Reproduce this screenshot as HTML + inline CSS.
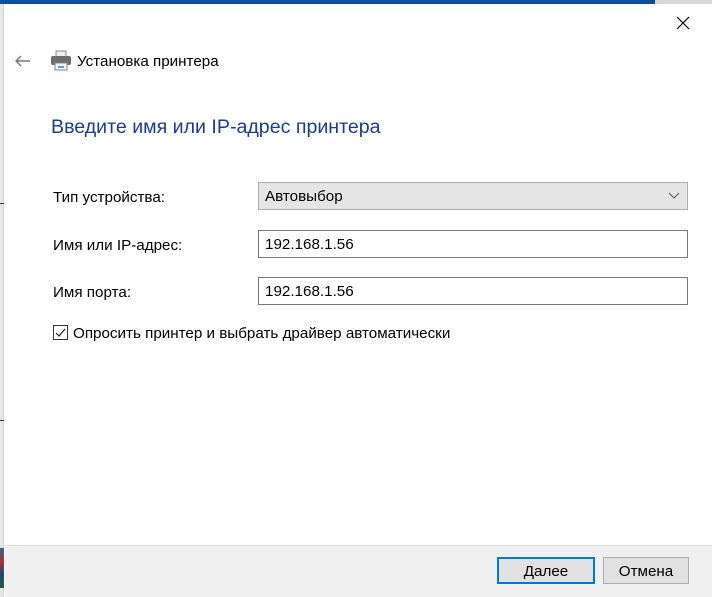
<!DOCTYPE html>
<html><head><meta charset="utf-8"><style>
*{margin:0;padding:0;box-sizing:border-box}
body{width:712px;height:597px;position:relative;overflow:hidden;background:#fff;font-family:"Segoe UI","Liberation Sans",sans-serif;color:#000;font-size:15.2px}
.abs{position:absolute}
.field{position:absolute;left:258px;width:430px;height:28px;border:1px solid #7a7a7a;padding:5px 0 0 6px;font-size:15.2px;background:#fff}
.lbl{position:absolute;left:53px;font-size:15.2px}
.btn{position:absolute;top:557px;height:27px;background:#e1e1e1;border:1px solid #adadad;text-align:center;padding-top:5px;font-size:15.2px}
</style></head><body>
<div class="abs" style="left:0;top:0;width:655px;height:4px;background:#0b4ea2"></div>
<div class="abs" style="left:655px;top:0;width:57px;height:4px;background:#d9d9d9"></div>
<div class="abs" style="left:0;top:4px;width:4px;height:593px;background:#e6e6e6;border-right:1px solid #d0d0d0"></div>
<div class="abs" style="left:0;top:203px;width:4px;height:1px;background:#333"></div>
<div class="abs" style="left:0;top:420px;width:4px;height:1px;background:#333"></div>
<div class="abs" style="left:0;top:548px;width:4px;height:40px;background:linear-gradient(#2a6a8a,#a33,#1a4a7a,#2a5a3a)"></div>
<svg class="abs" style="left:676px;top:16px" width="14" height="14"><path d="M1 1L13 13M13 1L1 13" stroke="#000" stroke-width="1.2"/></svg>
<svg class="abs" style="left:14px;top:54px" width="18" height="14"><path d="M16 7H2M7 2L2 7L7 12" stroke="#777" stroke-width="1.4" fill="none"/></svg>
<svg class="abs" style="left:50px;top:50px" width="22" height="22"><rect x="6" y="1" width="10" height="6" fill="#eee" stroke="#888"/><rect x="1" y="6" width="20" height="9" rx="2" fill="#6d6d6d"/><rect x="5" y="13" width="12" height="7" fill="#f4f4f4" stroke="#888"/><rect x="8" y="16" width="6" height="2" fill="#5aa0d8"/></svg>
<div class="abs" style="left:77px;top:53px;font-size:15.2px">Установка принтера</div>
<div class="abs" style="left:51px;top:116px;font-size:19.6px;color:#1a3d8f">Введите имя или IP-адрес принтера</div>
<div class="lbl" style="top:189px">Тип устройства:</div>
<div class="lbl" style="top:237px">Имя или IP-адрес:</div>
<div class="lbl" style="top:284px">Имя порта:</div>
<div class="field" style="top:182px;background:#e5e5e5;border-color:#adadad">Автовыбор</div>
<svg class="abs" style="left:668px;top:192px" width="12" height="8"><path d="M1 1L6 6L11 1" stroke="#555" fill="none"/></svg>
<div class="field" style="top:230px">192.168.1.56</div>
<div class="field" style="top:277px">192.168.1.56</div>
<div class="abs" style="left:53px;top:325px;width:15px;height:15px;border:1px solid #333;background:#fff"></div>
<svg class="abs" style="left:54px;top:326px" width="13" height="13"><path d="M2 7L5 10L11 3" stroke="#222" stroke-width="1.2" fill="none"/></svg>
<div class="abs" style="left:73px;top:325px">Опросить принтер и выбрать драйвер автоматически</div>
<div class="abs" style="left:5px;top:545px;width:707px;height:52px;background:#f0f0f0;border-top:1px solid #dfdfdf"></div>
<div class="btn" style="left:497px;width:98px;border:2px solid #0078d7;padding-top:4px">Далее</div>
<div class="btn" style="left:603px;width:86px">Отмена</div>
</body></html>
